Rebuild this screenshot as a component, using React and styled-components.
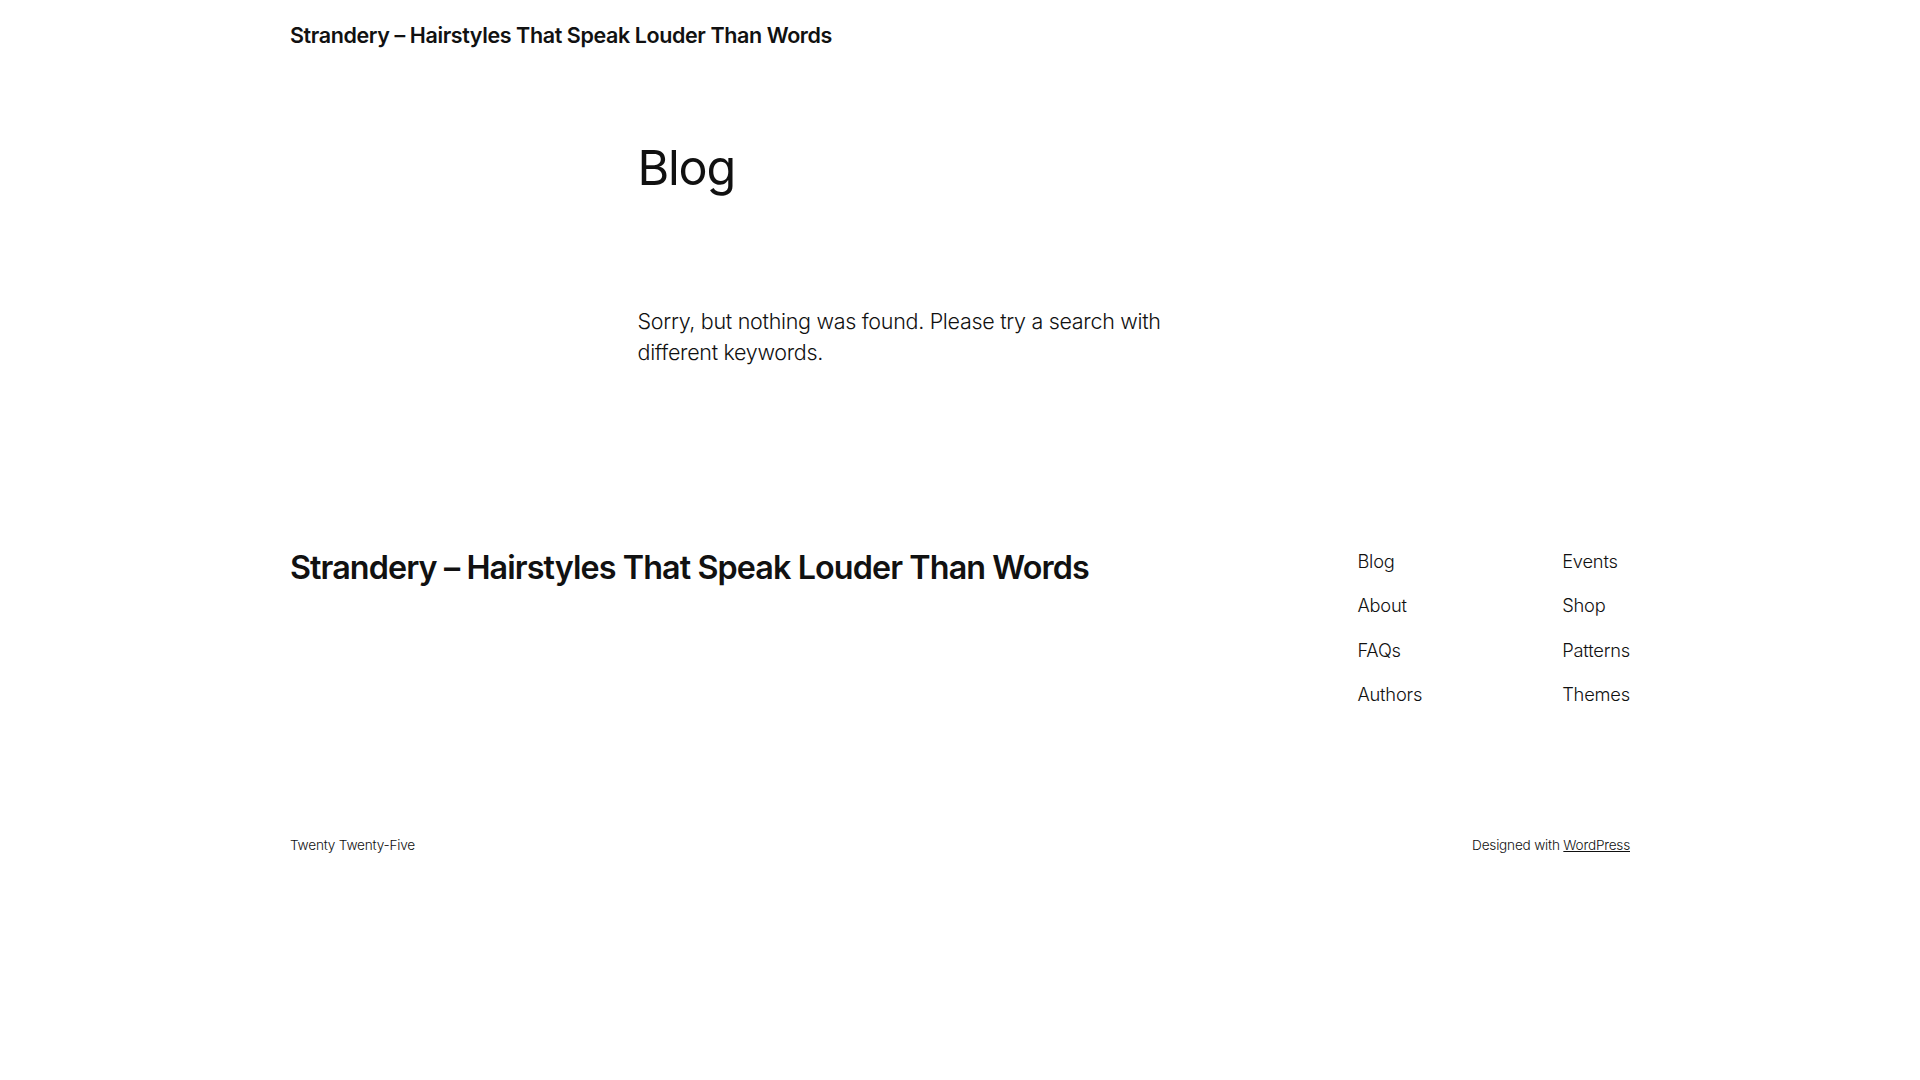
import React from "react";
import styled, { createGlobalStyle } from "styled-components";

const GlobalStyle = createGlobalStyle`
  html, body {
    margin: 0;
    padding: 0;
    background: #ffffff;
    color: #111111;
    font-family: Inter, "Noto Sans", sans-serif;
  }
`;

const Wide = styled.div`
  max-width: 1340px;
  margin: 0 auto;
`;

const Header = styled.header`
  padding-top: 25px;
`;

const SiteTitle = styled.a`
  display: block;
  color: #111111;
  text-decoration: none;
  font-weight: 600;
  font-size: ${({ $size }) => $size}px;
  line-height: 1;
  letter-spacing: ${({ $spacing }) => $spacing}px;
`;

const Main = styled.main`
  width: 645px;
  margin: 97px auto 0;
`;

const PageTitle = styled.h1`
  margin: 0;
  font-size: 48.5px;
  font-weight: 400;
  line-height: 1;
  letter-spacing: -1.2px;
`;

const Message = styled.p`
  margin: 114px 0 0;
  max-width: 560px;
  font-size: 21.5px;
  font-weight: 300;
  line-height: 30.5px;
  letter-spacing: -0.3px;
`;

const Footer = styled.footer`
  margin-top: 183px;
`;

const FooterTop = styled.div`
  display: flex;
  justify-content: space-between;
  align-items: flex-start;

  ${SiteTitle} {
    margin-top: 2px;
  }
`;

const NavGroup = styled.nav`
  display: flex;
  gap: 140px;
`;

const NavList = styled.ul`
  list-style: none;
  margin: 0;
  padding: 0;
  display: flex;
  flex-direction: column;
  gap: 21px;
`;

const NavLink = styled.a`
  display: block;
  color: #111111;
  text-decoration: none;
  font-size: 18.3px;
  font-weight: 300;
  line-height: 23.4px;
  letter-spacing: -0.2px;
`;

const FooterBottom = styled.div`
  margin-top: 129px;
  display: flex;
  justify-content: space-between;
  font-size: 13.6px;
  font-weight: 300;
  line-height: 19.6px;
  letter-spacing: -0.2px;

  a {
    color: #111111;
  }
`;

const columns = [
  ["Blog", "About", "FAQs", "Authors"],
  ["Events", "Shop", "Patterns", "Themes"],
];

const siteName = "Strandery – Hairstyles That Speak Louder Than Words";

export default function App() {
  return (
    <>
      <GlobalStyle />
      <Header>
        <Wide>
          <SiteTitle href="#" $size={21.5} $spacing={-0.4}>
            {siteName}
          </SiteTitle>
        </Wide>
      </Header>
      <Main>
        <PageTitle>Blog</PageTitle>
        <Message>
          Sorry, but nothing was found. Please try a search with different
          keywords.
        </Message>
      </Main>
      <Footer>
        <Wide>
          <FooterTop>
            <SiteTitle href="#" $size={32.3} $spacing={-0.9}>
              {siteName}
            </SiteTitle>
            <NavGroup>
              {columns.map((col, i) => (
                <NavList key={i}>
                  {col.map((item) => (
                    <li key={item}>
                      <NavLink href="#">{item}</NavLink>
                    </li>
                  ))}
                </NavList>
              ))}
            </NavGroup>
          </FooterTop>
          <FooterBottom>
            <span>Twenty Twenty-Five</span>
            <span>
              Designed with <a href="#">WordPress</a>
            </span>
          </FooterBottom>
        </Wide>
      </Footer>
    </>
  );
}
